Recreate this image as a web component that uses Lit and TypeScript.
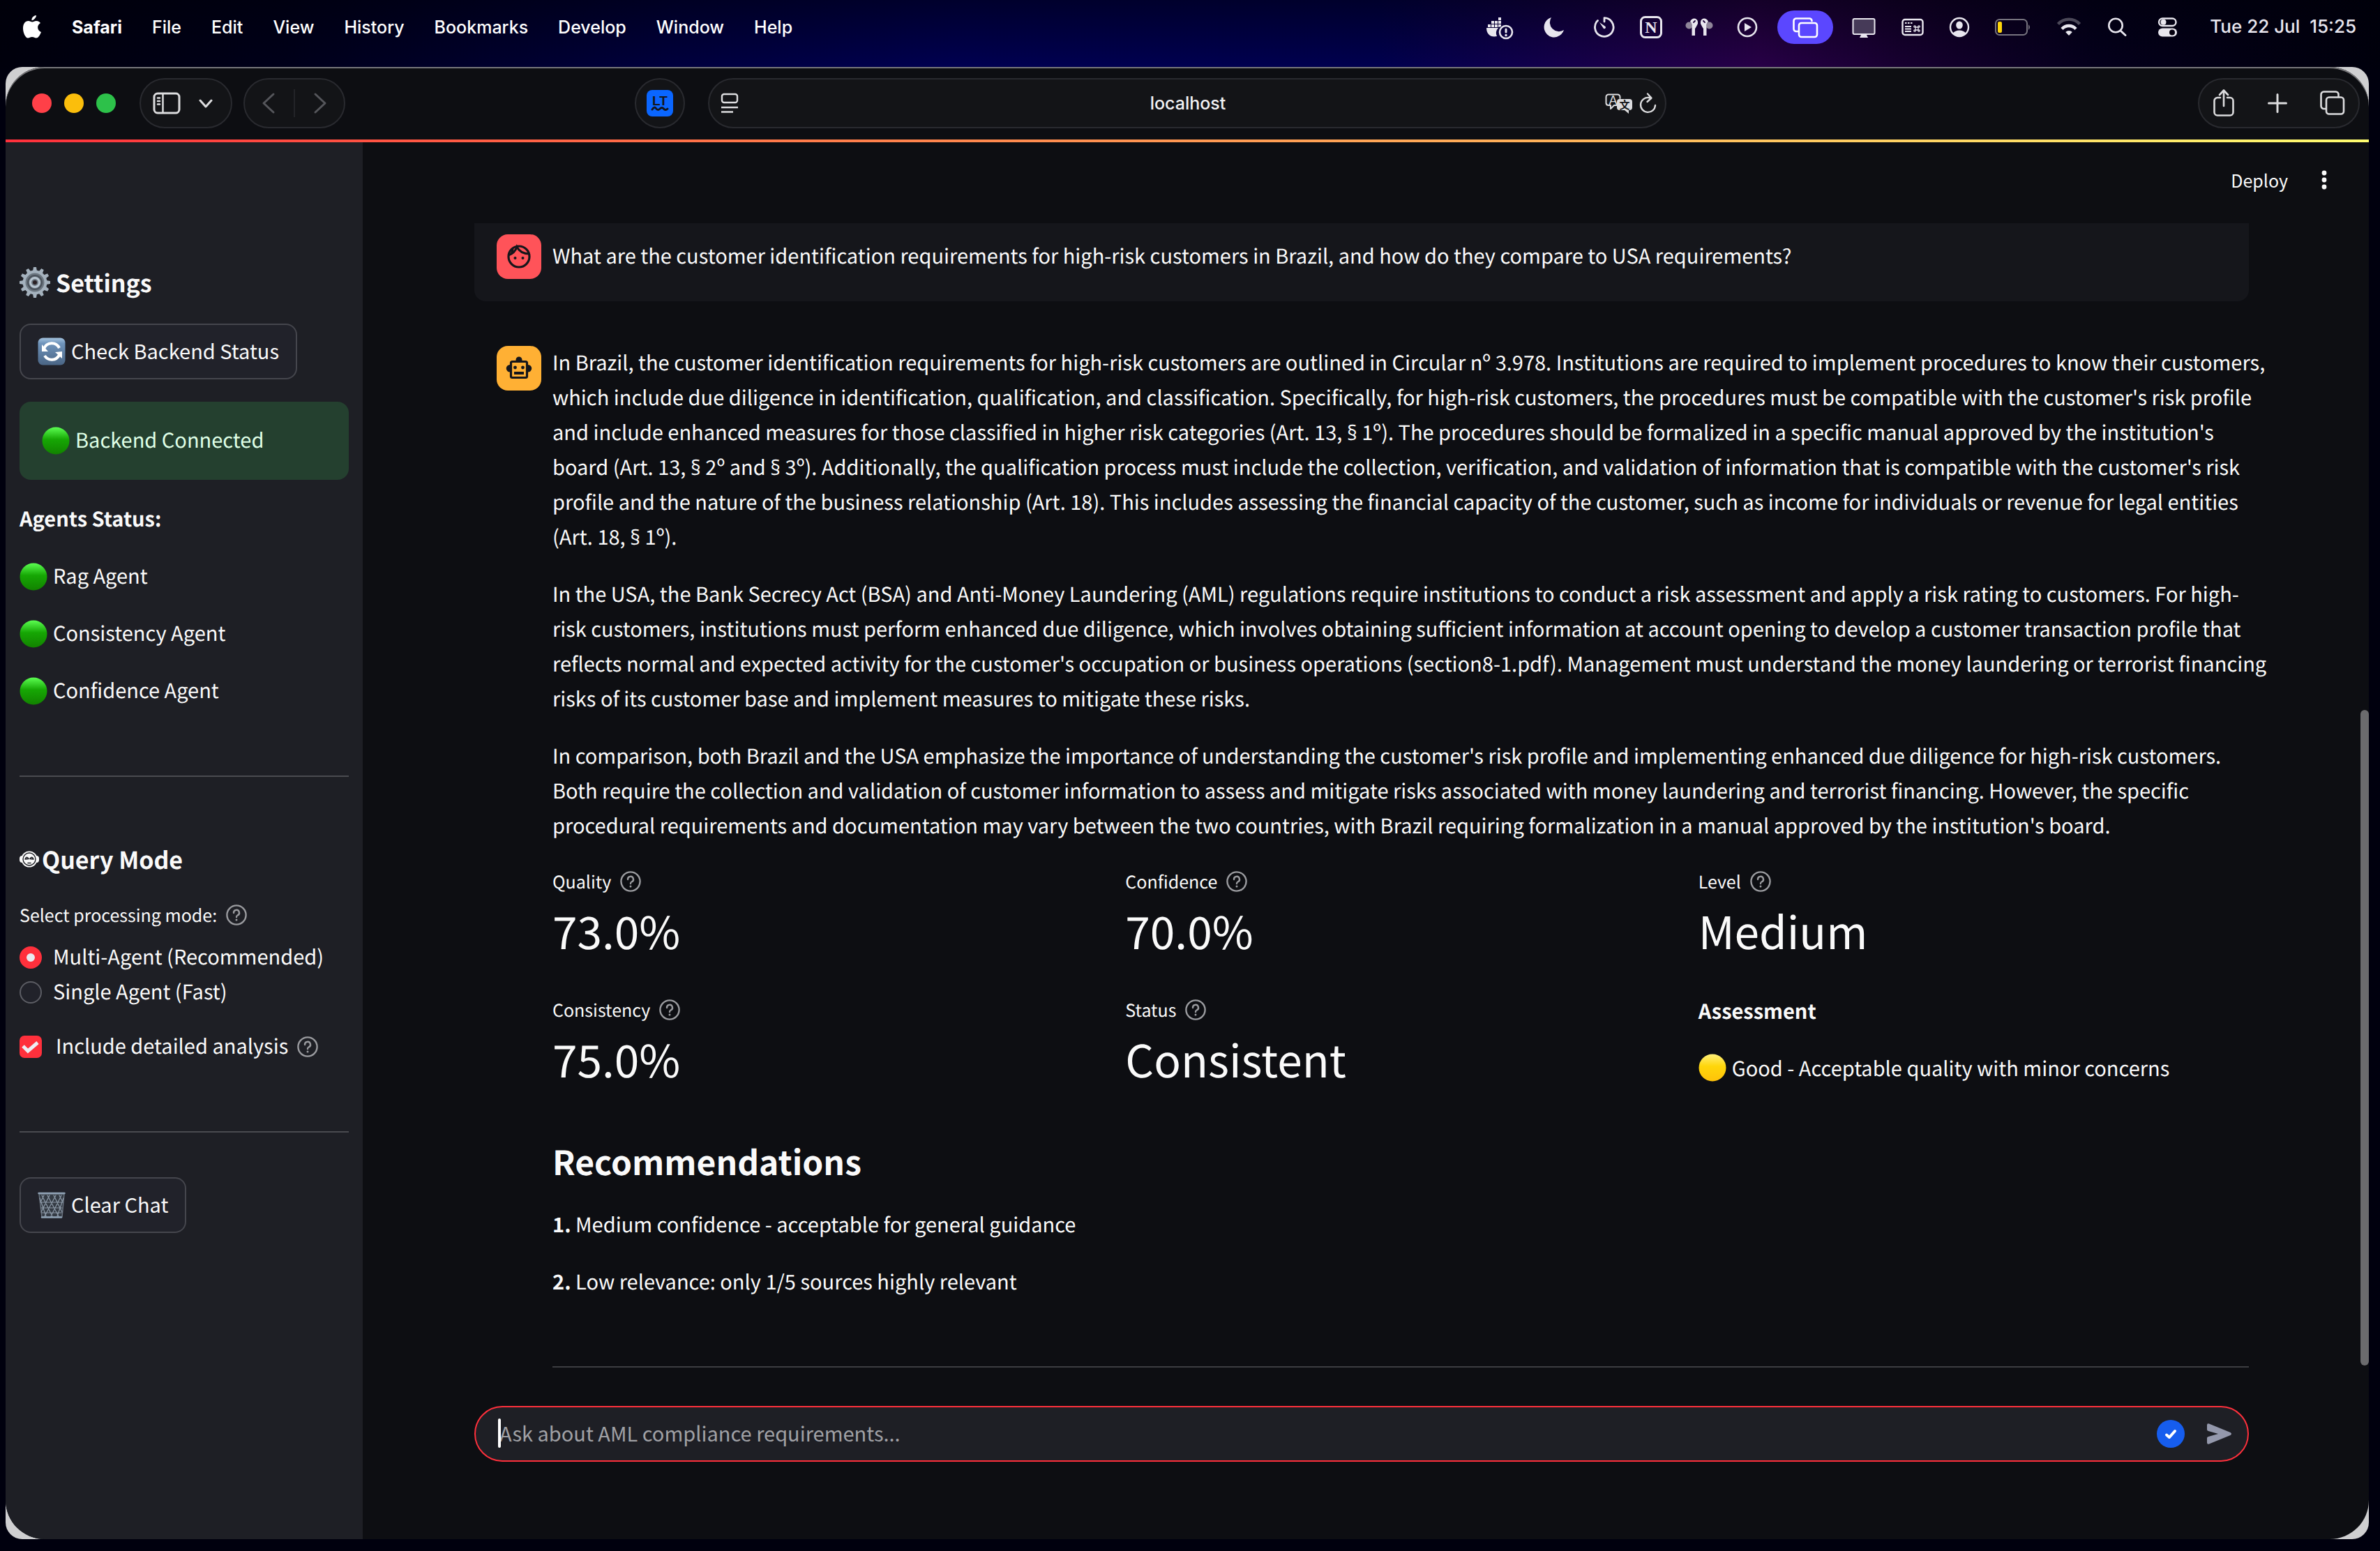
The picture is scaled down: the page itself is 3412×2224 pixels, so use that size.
import { LitElement, html, svg, css } from "lit";
import { customElement } from "lit/decorators.js";

const icon = (w: number, h: number, body: unknown) => html`<svg
  class="icon"
  width=${w}
  height=${h}
  viewBox="${-w / 2} ${-h / 2} ${w} ${h}"
  fill="none"
  stroke-linecap="round"
  stroke-linejoin="round"
  aria-hidden="true"
>${body}</svg>`;

const ink = "#e8e6ee";

const menus = ["File", "Edit", "View", "History", "Bookmarks", "Develop", "Window", "Help"];

const statusItems: { name: string; width: number; art: unknown }[] = [
  {
    name: "Docker",
    width: 80,
    art: svg`<g fill=${ink}>
      <path d="M-19 1H-2A11 11 0 0 0-4 13C-12 15-19 11-19 1Z"/>
      <path d="M-17-4h4v4h-4zM-12-4h4v4h-4zM-7-4h4v4h-4zM-2-4h4v3l-4 1zM-12-9h4v4h-4zM-7-9h4v4h-4zM-2-9h4v4h-4zM-2-14h4v4h-4z"/>
      </g><circle cx="9" cy="7" r="9" stroke=${ink} stroke-width="2.600"/><path d="M9 3V7" stroke=${ink} stroke-width="3"/><circle cx="9" cy="11.500" r="1.700" fill=${ink}/>`,
  },
  { name: "Focus", width: 76, art: svg`<path fill=${ink} d="M-4-14A14.500 14.500 0 1 0 14 4A13 13 0 0 1-4-14Z"/>` },
  {
    name: "Timer",
    width: 68,
    art: svg`<path stroke=${ink} stroke-width="2.800" d="M0-8V-13.300A13.300 13.300 0 1 1-9.500-9.500"/><path fill=${ink} d="M-7-7L1.500-1A2 2 0 0 1-1 2Z"/>`,
  },
  {
    name: "Notion",
    width: 66,
    art: svg`<rect x="-14.500" y="-14.500" width="29" height="29" rx="6" stroke=${ink} stroke-width="3"/><text class="badge-n" x="0" y="8" text-anchor="middle">N</text>`,
  },
  {
    name: "AirPods",
    width: 72,
    art: svg`<g fill="#8f8599"><circle cx="-14.500" cy="-2.500" r="5"/><circle cx="14.500" cy="-2.500" r="5"/></g>
      <path fill=${ink} d="M-13-8C-11-14-3-14-2-8V-5Q-5 1-6 2V12H-10.500V1Q-9-5-13-8ZM13-8C11-14 3-14 2-8V-5Q5 1 6 2V12H10.500V1Q9-5 13-8Z"/>
      <path stroke="#1c0038" stroke-width="1.800" d="M-8-7L-6-9M8-7L6-9"/>`,
  },
  { name: "Now Playing", width: 66, art: svg`<circle r="13" stroke=${ink} stroke-width="2.600"/><path fill=${ink} d="M-4-6L6 0L-4 6Z"/>` },
  {
    name: "Stage Manager",
    width: 100,
    art: svg`<rect x="-40" y="-24" width="80" height="48" rx="24" fill="#5b47ff"/><g stroke="#fff" stroke-width="2.600"><path d="M-10 6H-13A3.500 3.500 0 0 1-16.500 2.500V-9A3.500 3.500 0 0 1-13-12.500H6A3.500 3.500 0 0 1 9.500-9"/><rect x="-9" y="-6" width="26" height="20" rx="3.500"/></g>`,
  },
  {
    name: "Display",
    width: 68,
    art: svg`<rect x="-15.500" y="-12" width="31" height="22" rx="2" fill="#463a58" stroke=${ink} stroke-width="2"/><path fill=${ink} d="M-3.500 10H3.500L6 15H-6Z"/>`,
  },
  {
    name: "Shortcuts",
    width: 70,
    art: svg`<rect x="-13.500" y="-11" width="29" height="22" rx="3.500" stroke=${ink} stroke-width="2.400"/><path stroke=${ink} stroke-width="2" stroke-linecap="butt" d="M-10-6h2.500M-6-6h2.500M-2-6h2.500M-10-1h9M-10 2.500h9M-10 6h9"/><g stroke=${ink} stroke-width="1.300"><rect x="5" y="0" width="4" height="4"/><circle cx="4" cy="-1" r="1.200"/><circle cx="10" cy="-1" r="1.200"/><circle cx="4" cy="5" r="1.200"/><circle cx="10" cy="5" r="1.200"/></g>`,
  },
  {
    name: "User",
    width: 66,
    art: svg`<circle r="13" stroke=${ink} stroke-width="2.400"/><ellipse cx="0" cy="-3" rx="4.800" ry="5.500" fill=${ink}/><path fill=${ink} d="M-9.500 9C-6 3 6 3 9.500 9A13 13 0 0 1-9.500 9Z"/>`,
  },
  {
    name: "Battery",
    width: 88,
    art: svg`<rect x="-25" y="-11" width="45" height="22" rx="5.500" stroke="#77747f" stroke-width="2"/><rect x="-22" y="-8" width="6" height="16" rx="2" fill="#ffd60a"/><path fill="#77747f" d="M22-4Q26 0 22 4Z"/>`,
  },
  {
    name: "Wi-Fi",
    width: 72,
    art: svg`<path stroke="#4b4858" stroke-width="4.400" stroke-linecap="butt" d="M-15.500-4.500A21 21 0 0 1 15.500-4.500"/><path stroke=${ink} stroke-width="4.400" stroke-linecap="butt" d="M-10 2.500A13.500 13.500 0 0 1 10 2.500"/><path fill=${ink} d="M-4.800 7A6.500 6.500 0 0 1 4.800 7L0 12Z"/>`,
  },
  { name: "Search", width: 66, art: svg`<circle cx="-2" cy="-2.500" r="9.700" stroke=${ink} stroke-width="2.600"/><path stroke=${ink} stroke-width="3" d="M5 5L12 11.500"/>` },
  {
    name: "Control Centre",
    width: 78,
    art: svg`<rect x="-12" y="-12.500" width="24.500" height="10.500" rx="5.200" stroke=${ink} stroke-width="2.400"/><circle cx="-5.500" cy="-7.200" r="4" fill=${ink}/><rect x="-13" y="1.500" width="27" height="12" rx="6" fill=${ink}/><circle cx="7" cy="7.500" r="4" fill="#04000f"/>`,
  },
];

const help = (label: string) => html`<button class="help" aria-label="Help for ${label}">
  ${icon(32, 32, svg`<circle r="13.600" stroke="#9a9b9f" stroke-width="2.400"/><path stroke="#9a9b9f" stroke-width="2.400" d="M-4-3A4 4 0 1 1 1.500 0.500Q0 1.200 0 3"/><circle cy="7" r="1.500" fill="#9a9b9f"/>`)}
</button>`;

const dot = (top: string, mid: string, low: string, id: string) => icon(
  40,
  40,
  svg`<defs><linearGradient id=${id} x1="0" y1="0" x2="0" y2="1"><stop offset="0" stop-color=${top}/><stop offset="0.450" stop-color=${mid}/><stop offset="1" stop-color=${low}/></linearGradient></defs><circle r="19.500" fill="url(#${id})"/>`,
);
const greenDot = () => dot("#5cff52", "#16a704", "#128200", "green");
const yellowDot = () => dot("#fff07a", "#ffd60a", "#ffc20a", "yellow");

const gearTeeth = Array.from({ length: 12 }, (_, i) => svg`<path transform="rotate(${i * 30})" d="M-3-16L-2-22H2L3-16Z" fill="#a4b1bd"/>`);
const gear = () => icon(
  44,
  44,
  svg`${gearTeeth}<circle r="15.500" fill="#6c7680" stroke="#a4b1bd" stroke-width="4"/><circle r="10" stroke="#4a525b" stroke-width="2"/><circle r="6.500" stroke="#b9c6d1" stroke-width="3"/><circle r="3" fill="#2a2024"/>`,
);

const refresh = () => icon(
  40,
  40,
  svg`<defs><linearGradient id="blue" x1="0" y1="0" x2="0" y2="1"><stop offset="0" stop-color="#a5c4e0"/><stop offset="0.200" stop-color="#6f94bb"/><stop offset="1" stop-color="#4a6585"/></linearGradient></defs>
  <rect x="-19.500" y="-19.500" width="39" height="39" rx="7" fill="url(#blue)"/>
  <path stroke="#fff" stroke-width="4" stroke-linecap="butt" d="M-11-4A12 12 0 0 1 11-5M11 5A12 12 0 0 1-10 6"/><path fill="#fff" d="M-14-10V0H-5ZM15 0V10L5 1Z"/>`,
);

const trash = () => icon(
  40,
  40,
  svg`<path fill="#343b44" stroke="#69737f" stroke-width="1.500" d="M-18-16H18L15 17H-14Z"/>
  <path stroke="#8d9aa8" stroke-width="1.200" d="M-17-10L-8 16M-14-14L1 16M-6-14L10 16M3-14L15 10M11-14L16-4M17-10L8 16M14-14L-1 16M6-14L-10 16M-3-14L-15 10M-11-14L-16-4M-16-4H16M-15 4H15M-14 11H14"/>
  <path stroke="#8fa2b5" stroke-width="2.500" d="M-18.500-17H18.500M-14 17.500H14"/>`,
);

const headGlyph = () => icon(
  28,
  24,
  svg`<rect x="-14" y="-5" width="28" height="10" rx="4" fill="#fafafa"/><ellipse rx="11.500" ry="11.500" fill="#fafafa"/><ellipse rx="9" ry="9" stroke="#1e1f25" stroke-width="1.400"/><path stroke="#1e1f25" stroke-width="1.600" d="M-6 0Q-3.500-5-1-0.500ZM6 0Q3.500-5 1-0.500ZM-2 5.500H2"/>`,
);

const agents = ["Rag Agent", "Consistency Agent", "Confidence Agent"];

const answer = [
  [
    "In Brazil, the customer identification requirements for high-risk customers are outlined in Circular nº 3.978. Institutions are required to implement procedures to know their customers,",
    "which include due diligence in identification, qualification, and classification. Specifically, for high-risk customers, the procedures must be compatible with the customer's risk profile",
    "and include enhanced measures for those classified in higher risk categories (Art. 13, § 1º). The procedures should be formalized in a specific manual approved by the institution's",
    "board (Art. 13, § 2º and § 3º). Additionally, the qualification process must include the collection, verification, and validation of information that is compatible with the customer's risk",
    "profile and the nature of the business relationship (Art. 18). This includes assessing the financial capacity of the customer, such as income for individuals or revenue for legal entities",
    "(Art. 18, § 1º).",
  ],
  [
    "In the USA, the Bank Secrecy Act (BSA) and Anti-Money Laundering (AML) regulations require institutions to conduct a risk assessment and apply a risk rating to customers. For high-",
    "risk customers, institutions must perform enhanced due diligence, which involves obtaining sufficient information at account opening to develop a customer transaction profile that",
    "reflects normal and expected activity for the customer's occupation or business operations (section8-1.pdf). Management must understand the money laundering or terrorist financing",
    "risks of its customer base and implement measures to mitigate these risks.",
  ],
  [
    "In comparison, both Brazil and the USA emphasize the importance of understanding the customer's risk profile and implementing enhanced due diligence for high-risk customers.",
    "Both require the collection and validation of customer information to assess and mitigate risks associated with money laundering and terrorist financing. However, the specific",
    "procedural requirements and documentation may vary between the two countries, with Brazil requiring formalization in a manual approved by the institution's board.",
  ],
];

/* The CJK face draws the section sign full width, so it is set in a Latin face. */
const prose = (text: string) =>
  text.split("§").map((part, i) => (i ? html`<span class="latin">§</span>${part}` : part));

const metrics = [
  ["Quality", "73.0%"],
  ["Confidence", "70.0%"],
  ["Level", "Medium"],
  ["Consistency", "75.0%"],
  ["Status", "Consistent"],
];

const recommendations = [
  "Medium confidence - acceptable for general guidance",
  "Low relevance: only 1/5 sources highly relevant",
];

const shared = css`
  * {
    box-sizing: border-box;
  }
  button {
    display: flex;
    align-items: center;
    margin: 0;
    padding: 0;
    border: 0;
    background: none;
    color: inherit;
    font: inherit;
  }
  .icon {
    display: block;
    flex: none;
  }
  p,
  h2,
  h3 {
    margin: 0;
  }
  .help {
    margin-left: 12px;
  }
`;

@customElement("menu-bar")
class MenuBar extends LitElement {
  static styles = [
    shared,
    css`
      :host {
        display: flex;
        justify-content: space-between;
        align-items: center;
        height: 78px;
        padding: 0 18px 0 24px;
        color: #fff;
        font: 500 25px/36px Inter, sans-serif;
      }
      .side {
        display: flex;
        align-items: center;
      }
      .menus {
        gap: 43px;
      }
      .app {
        font-weight: 700;
      }
      .clock {
        margin-left: 22px;
        color: #e8e6ee;
        font-size: 26px;
        white-space: pre;
      }
      .badge-n {
        font: bold 24px "Liberation Serif", serif;
        fill: #e8e6ee;
      }
    `,
  ];
  render() {
    return html`
      <nav class="side menus" aria-label="Menu bar">
        <button aria-label="Apple menu">
          ${icon(28, 34, svg`<path fill="#fff" d="M6-9C9-9 11-7.500 12-6C6-2.500 7.500 5 13 7C11 12 8.500 15.500 6 15.500C3.500 15.500 3 14 0 14C-3 14-3.500 15.500-6 15.500C-9.500 15.500-13 8-13 1.500C-13-5-9.500-9-5.500-9C-3-9-1.500-7.500 0.300-7.500C2-7.500 3.500-9 6-9ZM6-17C6.500-13-0.500-8.500-0.500-10C-1-14 3-17 6-17Z"/>`)}
        </button>
        <button class="app">Safari</button>
        ${menus.map((m) => html`<button>${m}</button>`)}
      </nav>
      <div class="side">
        ${statusItems.map((s) => html`<button aria-label=${s.name}>${icon(s.width, 48, s.art)}</button>`)}
        <time class="clock">Tue 22 Jul  15:25</time>
      </div>
    `;
  }
}

@customElement("browser-toolbar")
class BrowserToolbar extends LitElement {
  static styles = [
    shared,
    css`
      :host {
        display: grid;
        grid-template-columns: 1007fr 1374fr 1007fr;
        align-items: center;
        height: 104px;
        color: #e6e6e8;
        font: 500 25px/36px Inter, sans-serif;
      }
      .left {
        display: flex;
        align-items: center;
        padding: 0 33px 0 38px;
      }
      .lights {
        display: flex;
        gap: 18px;
        margin-right: 34px;
      }
      .light {
        width: 28px;
        height: 28px;
        border-radius: 50%;
      }
      .close {
        background: #ff4048;
      }
      .min {
        background: #fbbe0c;
      }
      .max {
        background: #2dc14a;
      }
      .pill {
        display: flex;
        align-items: center;
        height: 72px;
        border: 2px solid #292a2f;
        border-radius: 36px;
        background: #131417;
      }
      .panel {
        gap: 26px;
        padding: 0 26px 0 17px;
      }
      .arrows {
        gap: 26px;
        margin-left: 16px;
        padding: 0 24px;
      }
      .sep {
        width: 2px;
        height: 40px;
        background: #232428;
      }
      .round {
        width: 72px;
        justify-content: center;
        margin-left: auto;
      }
      .lt {
        font: bold 19px "Liberation Sans", sans-serif;
        fill: #14161c;
      }
      .url {
        gap: 8px;
        padding: 0 12px 0 16px;
      }
      .address {
        flex: 1;
        min-width: 0;
        margin-left: 46px;
        border: 0;
        background: none;
        color: #f2f2f4;
        font: inherit;
        text-align: center;
      }
      .right {
        display: flex;
        justify-content: flex-end;
        padding-right: 13px;
      }
      .actions {
        gap: 40px;
        padding: 0 18px;
      }
      .glyph-a {
        font: 18px "Liberation Sans", sans-serif;
        fill: #dcdcde;
      }
      .glyph-b {
        font: bold 15px "Noto Sans CJK SC", sans-serif;
        fill: #131417;
      }
    `,
  ];
  render() {
    const c = "#dcdcde";
    return html`
      <div class="left">
        <div class="lights">
          <button class="light close" aria-label="Close"></button>
          <button class="light min" aria-label="Minimise"></button>
          <button class="light max" aria-label="Zoom"></button>
        </div>
        <div class="pill panel">
          <button aria-label="Show sidebar">
            ${icon(40, 32, svg`<rect x="-18" y="-14" width="36" height="28" rx="5" stroke=${c} stroke-width="3"/><path stroke=${c} stroke-width="2.500" d="M-5.500-13V13M-13-7.500H-10M-13-3H-10M-13 1.500H-10"/>`)}
          </button>
          <button aria-label="Tab groups">${icon(20, 20, svg`<path stroke=${c} stroke-width="3" d="M-8-4L0 5L8-4"/>`)}</button>
        </div>
        <div class="pill arrows">
          <button aria-label="Back">${icon(20, 32, svg`<path stroke="#55565b" stroke-width="3" d="M7-13L-7 0L7 13"/>`)}</button>
          <span class="sep"></span>
          <button aria-label="Forward">${icon(20, 32, svg`<path stroke="#55565b" stroke-width="3" d="M-7-13L7 0L-7 13"/>`)}</button>
        </div>
        <button class="pill round" aria-label="LanguageTool">
          ${icon(38, 38, svg`<rect x="-19" y="-19" width="38" height="38" rx="8" fill="#0a66ff"/><text class="lt" x="0" y="3" text-anchor="middle">LT</text><path stroke="#14161c" stroke-width="3" d="M-11 9Q-8 4-5.500 7.500T0 8T5.500 8T11 8"/>`)}
        </button>
      </div>
      <div class="pill url">
        <button aria-label="Reader">
          ${icon(26, 32, svg`<rect x="-11" y="-13" width="22" height="12" rx="3" stroke=${c} stroke-width="2.400"/><path stroke=${c} stroke-width="2.400" stroke-linecap="butt" d="M-12 6H12M-12 12.500H5"/>`)}
        </button>
        <input class="address" type="text" aria-label="Address" .value=${"localhost"} />
        <button aria-label="Translate">
          ${icon(40, 32, svg`<path stroke=${c} stroke-width="2" d="M0 3H-7L-12 8V3H-15A3.500 3.500 0 0 1-18.500 0V-9A3.500 3.500 0 0 1-15-12.500H-2A3.500 3.500 0 0 1 1.500-9V-7"/><text class="glyph-a" x="-8.500" y="1.500" text-anchor="middle">A</text><path fill=${c} d="M1-6H15A4 4 0 0 1 19-2V6A4 4 0 0 1 15 10H14V15L8 10H1A4 4 0 0 1-3 6V-2A4 4 0 0 1 1-6Z"/><text class="glyph-b" x="8" y="7.500" text-anchor="middle">文</text>`)}
        </button>
        <button aria-label="Reload">
          ${icon(26, 32, svg`<path stroke=${c} stroke-width="2.400" d="M11 3A10.500 10.500 0 1 1 2-8L5-7M0-13.500L5.500-7.500L-0.500-2"/>`)}
        </button>
      </div>
      <div class="right">
        <div class="pill actions">
          <button aria-label="Share">
            ${icon(34, 40, svg`<path stroke=${c} stroke-width="2.600" d="M-5-8H-9A4.500 4.500 0 0 0-13.500-3.500V13A4.500 4.500 0 0 0-9 17.500H9A4.500 4.500 0 0 0 13.500 13V-3.500A4.500 4.500 0 0 0 9-8H5M0 4V-18M-6-12L0-18.500L6-12"/>`)}
          </button>
          <button aria-label="New tab">${icon(40, 32, svg`<path stroke=${c} stroke-width="3" d="M0-12.500V12.500M-12.500 0H12.500"/>`)}</button>
          <button aria-label="Tab overview">
            ${icon(38, 40, svg`<g stroke=${c} stroke-width="2.600"><rect x="-9" y="-8.500" width="25" height="24" rx="4"/><path d="M-10 8H-12A4 4 0 0 1-16.500 4V-12A4 4 0 0 1-12.500-16.500H4A4 4 0 0 1 8.500-12V-9"/></g>`)}
          </button>
        </div>
      </div>
    `;
  }
}

@customElement("settings-sidebar")
class SettingsSidebar extends LitElement {
  static styles = [
    shared,
    css`
      :host {
        display: block;
        width: 512px;
        flex: none;
        padding: 177px 20px 0;
        background: #1e1f25;
      }
      .title {
        display: flex;
        align-items: center;
        gap: 8px;
        font-size: 34px;
        line-height: 48px;
        font-weight: 700;
      }
      .query {
        gap: 4px;
      }
      .btn {
        height: 80px;
        padding: 0 24px;
        gap: 8px;
        border: 2px solid #45464d;
        border-radius: 16px;
        background: #21222a;
        white-space: nowrap;
      }
      .check {
        margin: 35px 0 32px;
      }
      .alert {
        display: flex;
        align-items: center;
        gap: 8px;
        height: 112px;
        padding: 0 32px;
        border-radius: 16px;
        background: #24402f;
        color: #dfffe6;
      }
      .text {
        margin-top: -4px;
      }
      .agents {
        margin: 34px 0 0;
        padding: 0;
        list-style: none;
      }
      .agents-title {
        margin-top: 30px;
        font-weight: 700;
      }
      .agent {
        display: flex;
        align-items: center;
        gap: 8px;
        height: 50px;
        margin-bottom: 32px;
      }
      .rule {
        height: 2px;
        margin: 96px 0 94px;
        border: 0;
        background: #4a4b50;
      }
      .last {
        margin-bottom: 64px;
      }
      .modes {
        margin: 36px 0 28px;
        padding: 0;
        border: 0;
      }
      .legend {
        display: flex;
        align-items: center;
        margin-bottom: 16px;
        padding: 0;
        font-size: 25px;
        line-height: 40px;
      }
      .choice {
        display: flex;
        align-items: center;
        height: 50px;
      }
      .box {
        appearance: none;
        width: 32px;
        height: 32px;
        flex: none;
        margin: 0 16px 0 0;
        border: 2px solid #5c5d64;
        border-radius: 50%;
        background: #21222a;
      }
      .box:checked {
        border: 10px solid #ff303c;
        background: #e9eaf0;
      }
      .tick-row {
        display: flex;
        align-items: center;
      }
      .tick {
        display: grid;
        margin-right: 20px;
      }
      .tick > * {
        grid-area: 1 / 1;
      }
      .tick .box {
        margin: 0;
        border-radius: 7px;
      }
      .tick .box:checked {
        border: 0;
        background: #ff303c;
      }
      .tick .icon {
        pointer-events: none;
        position: relative;
      }
    `,
  ];
  render() {
    return html`
      <h3 class="title">${gear()}<span>Settings</span></h3>
      <button class="btn check">${refresh()}<span class="text">Check Backend Status</span></button>
      <div class="alert" role="status">${greenDot()}<span class="text">Backend Connected</span></div>
      <p class="agents-title">Agents Status:</p>
      <ul class="agents">
        ${agents.map((a) => html`<li class="agent">${greenDot()}<span class="text">${a}</span></li>`)}
      </ul>
      <hr class="rule" />
      <h3 class="title query">${headGlyph()}<span>Query Mode</span></h3>
      <fieldset class="modes">
        <legend class="legend">Select processing mode:${help("processing mode")}</legend>
        <label class="choice"><input class="box" type="radio" name="mode" checked /><span class="text">Multi-Agent (Recommended)</span></label>
        <label class="choice"><input class="box" type="radio" name="mode" /><span class="text">Single Agent (Fast)</span></label>
      </fieldset>
      <div class="tick-row">
        <label class="choice">
          <span class="tick">
            <input class="box" type="checkbox" checked />
            ${icon(32, 32, svg`<path stroke="#eceef4" stroke-width="5" stroke-linecap="butt" stroke-linejoin="miter" d="M-11-1L-4 6L10-6"/>`)}
          </span>
          <span class="text">Include detailed analysis</span>
        </label>
        ${help("detailed analysis")}
      </div>
      <hr class="rule last" />
      <button class="btn">${trash()}<span class="text">Clear Chat</span></button>
    `;
  }
}

@customElement("chat-view")
class ChatView extends LitElement {
  static styles = [
    shared,
    css`
      :host {
        display: flex;
        flex-direction: column;
        flex: 1;
        min-width: 0;
        position: relative;
        padding: 0 172px 111px 160px;
      }
      .top {
        display: flex;
        justify-content: flex-end;
        align-items: center;
        gap: 36px;
        height: 116px;
        margin-right: -124px;
        padding-bottom: 8px;
        font-size: 25px;
      }
      .message {
        display: flex;
        align-items: flex-start;
        gap: 16px;
        padding: 16px 0 32px 32px;
      }
      .user {
        margin-bottom: 48px;
        border-radius: 0 0 16px 16px;
        background: #15161b;
      }
      .question {
        padding: 7px 0;
      }
      .avatar {
        flex: none;
        border-radius: 16px;
      }
      .red {
        background: #ff5359;
      }
      .amber {
        background: #ffb034;
      }
      .body {
        flex: 1;
        min-width: 0;
        margin-top: -2px;
      }
      .para {
        margin: 0 -48px 32px 0;
      }
      .latin {
        font-family: "Open Sans", sans-serif;
        line-height: 1;
      }
      .metrics {
        display: grid;
        grid-template-columns: repeat(3, 1fr);
        gap: 54px 32px;
        margin-top: 36px;
      }
      .label {
        display: flex;
        align-items: center;
        font-size: 25px;
        line-height: 40px;
      }
      .value {
        margin-top: 10px;
        font-size: 64px;
        line-height: 80px;
      }
      .strong {
        margin: -4px 0 32px;
        font-weight: 700;
      }
      .verdict {
        display: flex;
        align-items: center;
        gap: 8px;
      }
      .heading {
        margin: 76px 0 36px;
        font-size: 48px;
        line-height: 60px;
        font-weight: 700;
      }
      .rule {
        height: 2px;
        margin: 97px 0 22px;
        border: 0;
        background: #3c3d41;
      }
      .composer {
        display: flex;
        align-items: center;
        position: relative;
        height: 80px;
        margin-top: auto;
        padding: 0 18px 0 34px;
        border: 2px solid #ff303c;
        border-radius: 40px;
        background: #1e1f25;
      }
      .prompt {
        flex: 1;
        min-width: 0;
        padding: 0 0 4px;
        border: 0;
        outline: 0;
        background: none;
        color: #fafafa;
        font: inherit;
      }
      .prompt::placeholder {
        color: #a0a1a5;
        opacity: 1;
      }
      .caret {
        position: absolute;
        left: 32px;
        top: 16px;
        width: 4px;
        height: 42px;
        border-radius: 2px;
        background: #fff;
      }
      .send {
        margin-left: 28px;
      }
      .thumb {
        position: absolute;
        right: 0;
        top: 814px;
        bottom: 249px;
        width: 12px;
        border-radius: 6px;
        background: #6b6b6d;
      }
    `,
  ];
  render() {
    const dark = "#15161b";
    return html`
      <header class="top">
        <button>Deploy</button>
        <button aria-label="Main menu">${icon(32, 32, svg`<g fill="#fafafa"><circle cy="-10" r="3.400"/><circle r="3.400"/><circle cy="10" r="3.400"/></g>`)}</button>
      </header>
      <section class="message user">
        <svg class="avatar red" width="64" height="64" viewBox="-32 -32 64 64" fill="none" aria-hidden="true">
          <circle r="15" stroke=${dark} stroke-width="3.200" />
          <path stroke=${dark} stroke-width="3" d="M-15-2Q-6-5-3-14Q2-4 15-4M-9-11Q-9-7-12-3" />
          <circle cx="-5.500" cy="2" r="2" fill=${dark} /><circle cx="5.500" cy="2" r="2" fill=${dark} />
        </svg>
        <p class="body question">What are the customer identification requirements for high-risk customers in Brazil, and how do they compare to USA requirements?</p>
      </section>
      <section class="message">
        <svg class="avatar amber" width="64" height="64" viewBox="-32 -32 64 64" fill="none" aria-hidden="true">
          <rect x="-11.500" y="-9.500" width="23" height="23" rx="2" stroke=${dark} stroke-width="3.200" />
          <path fill=${dark} d="M-4.500-10V-12A4.500 4.500 0 0 1 4.500-12V-10ZM-12-5V5.500H-13A5 5 0 0 1-13-5ZM12-5V5.500H13A5 5 0 0 0 13-5ZM-7 5H7V9H-7Z" />
          <circle cx="-5.500" cy="-1" r="2.400" fill=${dark} /><circle cx="5.500" cy="-1" r="2.400" fill=${dark} />
        </svg>
        <div class="body">
          ${answer.map((lines) => html`<p class="para">${lines.map((l, i) => html`${i ? html`<br />` : ""}${prose(l)}`)}</p>`)}
          <div class="metrics">
            ${metrics.map(
              ([label, value]) => html`<div>
                <div class="label">${label}${help(label)}</div>
                <div class="value">${value}</div>
              </div>`,
            )}
            <div>
              <p class="strong">Assessment</p>
              <p class="verdict">${yellowDot()}<span>Good - Acceptable quality with minor concerns</span></p>
            </div>
          </div>
          <h2 class="heading">Recommendations</h2>
          ${recommendations.map((r, i) => html`<p class="para"><strong>${i + 1}.</strong> ${r}</p>`)}
          <hr class="rule" />
        </div>
      </section>
      <form class="composer" @submit=${(e: Event) => e.preventDefault()}>
        <span class="caret"></span>
        <input class="prompt" type="text" aria-label="Message" placeholder="Ask about AML compliance requirements..." />
        <button type="button" aria-label="Writing check">
          ${icon(40, 40, svg`<circle r="20" fill="#165dee"/><path stroke="#fff" stroke-width="4" d="M-6 1.500L-2 5L6-4"/>`)}
        </button>
        <button class="send" type="submit" aria-label="Send">
          ${icon(44, 40, svg`<path fill="#9498ac" d="M-18-12.500Q-18-15.500-15-14.500L15.500-2Q18.500 0 15.500 2L-15 14.500Q-18 15.500-18 12.500V6Q-18 4.500-16 4L-2 0L-16-4Q-18-4.500-18-6Z"/>`)}
        </button>
      </form>
      <div class="thumb"></div>
    `;
  }
}

@customElement("app-root")
class AppRoot extends LitElement {
  static styles = [
    shared,
    css`
      :host {
        display: flex;
        flex-direction: column;
        box-sizing: border-box;
        min-height: 100vh;
        padding: 0 16px 17px 8px;
        background:
          linear-gradient(180deg, rgba(0, 0, 8, 0.5), rgba(0, 0, 8, 0)) 0 0 / 100% 100px no-repeat,
          linear-gradient(90deg, #00000c 0%, #00001a 12%, #00003e 28%, #000052 40%, #000050 58%, #15004c 66%, #280048 74%, #170030 80%, #04001c 88%, #00000c 100%) 0 0 / 100% 100px no-repeat,
          #00000e;
        color: #fafafa;
        font: 400 29px/50px "Noto Sans CJK SC", "Noto Sans", sans-serif;
        text-rendering: geometricPrecision;
      }
      .frame {
        display: flex;
        flex: 1;
        margin-top: 18px;
        border-radius: 24px;
        background: #cfcfd1;
      }
      .window {
        display: flex;
        flex-direction: column;
        flex: 1;
        min-width: 0;
        overflow: hidden;
        border-radius: 56px;
        box-shadow: inset 0 2px 0 #77777a;
        background: #0d0e12;
      }
      .stripe {
        height: 4px;
        background: linear-gradient(90deg, #ff303c, #ff7a4a 33%, #ffb35a 66%, #fffd70);
      }
      .page {
        display: flex;
        flex: 1;
      }
    `,
  ];
  render() {
    return html`
      <menu-bar></menu-bar>
      <div class="frame">
        <div class="window">
          <browser-toolbar></browser-toolbar>
          <div class="stripe"></div>
          <main class="page">
            <settings-sidebar></settings-sidebar>
            <chat-view></chat-view>
          </main>
        </div>
      </div>
    `;
  }
}
